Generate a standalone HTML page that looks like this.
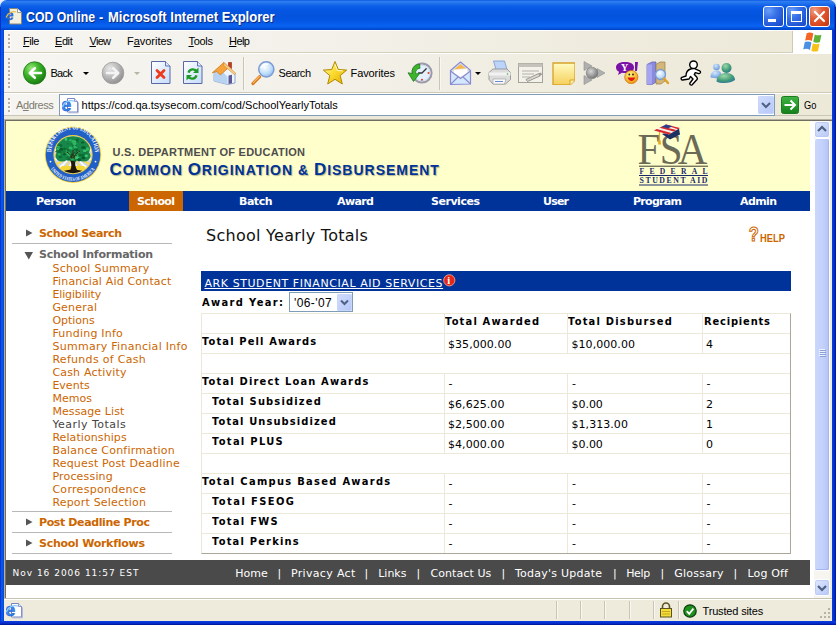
<!DOCTYPE html>
<html>
<head>
<meta charset="utf-8">
<title>COD Online - Microsoft Internet Explorer</title>
<style>
html,body{margin:0;padding:0;}
body{width:836px;height:625px;overflow:hidden;position:relative;background:#fff;font-family:"Liberation Sans",sans-serif;font-size:11px;color:#000;}
#win{position:absolute;left:0;top:0;width:836px;height:625px;background:#ece9d8;overflow:hidden;}
#win div,#win span,#win svg{position:absolute;}
.t{white-space:pre;line-height:1;}
.t u{text-decoration:underline;}
#title{left:0;top:0;width:836px;height:30px;border-radius:7px 7px 0 0;
 background:linear-gradient(to bottom,#0048d8 0px,#2f80f2 1px,#2474ee 3px,#0c5fe8 6px,#0556e2 10px,#0353dd 17px,#0458e6 22px,#0963f1 26px,#0556e0 28px,#0042c4 30px);}
#cornerbg{left:0;top:0;width:836px;height:10px;background:#e8eefc;}
.cbtn{top:6px;width:21px;height:21px;box-sizing:border-box;border:1px solid #fff;border-radius:3px;
 background:radial-gradient(circle at 25% 20%,#6a9ff8 0%,#3a74e8 35%,#2458d8 70%,#1a48c0 100%);}
.cbtn.close{background:radial-gradient(circle at 25% 20%,#f0a088 0%,#e2603a 35%,#d8481e 70%,#b83410 100%);}
.bl{left:0;top:30px;width:4px;height:595px;background:linear-gradient(to right,#001ad0 0,#0a52e4 1px,#0a5aea 2px,#0046d6 4px);}
.br{left:832px;top:30px;width:4px;height:595px;background:linear-gradient(to right,#0a3fe0 0,#0838d8 1px,#0428c4 2.500px,#00138c 4px);}
.bb{left:0;top:621px;width:836px;height:4px;background:linear-gradient(to bottom,#0a3fe0 0,#0838d8 1px,#0428c4 2.500px,#00138c 4px);}
.grip{width:2px;background:repeating-linear-gradient(to bottom,#b4b09c 0,#b4b09c 2px,rgba(255,255,255,0) 2px,rgba(255,255,255,0) 4px);box-shadow:1px 1px 0 rgba(255,255,255,.6);}
.sep{width:1px;background:#c9c5b2;box-shadow:1px 0 0 #f8f7f2;}
.dd{width:0;height:0;border-left:3px solid transparent;border-right:3px solid transparent;border-top:3px solid #000;}
#page{left:6px;top:121px;width:808px;height:477px;background:#fff;overflow:hidden;}
.hr{height:1px;background:#b8b8b8;left:6px;width:160px;}
.gl{background:#ece9d8;}
</style>
</head>
<body>
<div id="win">
<div id="cornerbg"></div><div id="title"></div>
<div class="bl"></div><div class="br"></div><div class="bb"></div>
<div style="left:0;top:7px;width:1px;height:23px;background:#0a2fc4"></div><div style="left:835px;top:7px;width:1px;height:23px;background:#001ea0"></div><div style="left:834px;top:5px;width:1px;height:25px;background:#0838d0"></div>
<svg style="left:5px;top:7px" width="19" height="19" viewBox="0 0 19 19"><path d="M4.500 1.500h8l4 4v11.500h-12z" fill="#f3f0e2" stroke="#8a8672" stroke-width="1"/><path d="M12.500 1.500v4h4" fill="#fff" stroke="#8a8672" stroke-width=".8"/>
<text x="0.800" y="13.200" font-family="Liberation Sans,sans-serif" font-weight="bold" font-size="14" fill="#2f6fe4" stroke="#1c3fb0" stroke-width=".3">e</text>
<path d="M1 10.500c2-5 7-6.500 10-5.500" fill="none" stroke="#f0c040" stroke-width="1.200"/></svg>
<span class="t" style="left:25.5px;top:9.5px;font:bold 14px 'Liberation Sans',sans-serif;line-height:1;transform:scaleX(0.878);transform-origin:0 0;color:#fff;text-shadow:1px 1px 0 #0a2a80;">COD Online</span><span class="t" style="left:98.5px;top:9.5px;font:bold 14px 'Liberation Sans',sans-serif;line-height:1;transform:scaleX(0.899);transform-origin:0 0;color:#fff;text-shadow:1px 1px 0 #0a2a80;">-</span><span class="t" style="left:107.5px;top:9.5px;font:bold 14px 'Liberation Sans',sans-serif;line-height:1;transform:scaleX(0.931);transform-origin:0 0;color:#fff;text-shadow:1px 1px 0 #0a2a80;">Microsoft Internet Explorer</span><div class="cbtn" style="left:763px"><div style="left:4px;top:12px;width:8px;height:3px;background:#fff"></div></div>
<div class="cbtn" style="left:786px"><div style="left:4px;top:4px;width:11px;height:11px;box-sizing:border-box;border:1px solid #fff;border-top-width:3px"></div></div>
<div class="cbtn close" style="left:809px"><svg style="left:0;top:0" width="19" height="19"><path d="M5 5l9 9M14 5l-9 9" stroke="#fff" stroke-width="2.2" stroke-linecap="round"/></svg></div>
<div style="left:4px;top:30px;width:828px;height:23px;background:linear-gradient(to right,#f6f5f1 0%,#f3f1ea 35%,#efecdf 70%,#ece9d8 100%)"></div>
<div style="left:4px;top:30px;width:828px;height:1px;background:#fff"></div>
<div style="left:4px;top:52px;width:789px;height:1px;background:#d4cfba"></div>
<div style="left:792px;top:31px;width:1px;height:21px;background:#cfcab6"></div>
<div style="left:793px;top:30px;width:39px;height:23px;background:#fff"></div>
<div class="grip" style="left:8px;top:34px;height:15px"></div>
<span class="t" style="left:23px;top:36px;font:normal 11px 'Liberation Sans',sans-serif;line-height:1;letter-spacing:-0.42px;color:#000;"><u>F</u>ile</span><span class="t" style="left:55px;top:36px;font:normal 11px 'Liberation Sans',sans-serif;line-height:1;letter-spacing:-0.42px;color:#000;"><u>E</u>dit</span><span class="t" style="left:89.5px;top:36px;font:normal 11px 'Liberation Sans',sans-serif;line-height:1;letter-spacing:-0.72px;color:#000;"><u>V</u>iew</span><span class="t" style="left:127px;top:36px;font:normal 11px 'Liberation Sans',sans-serif;line-height:1;letter-spacing:-0.03px;color:#000;">F<u>a</u>vorites</span><span class="t" style="left:188.5px;top:36px;font:normal 11px 'Liberation Sans',sans-serif;line-height:1;letter-spacing:-0.30px;color:#000;"><u>T</u>ools</span><span class="t" style="left:229px;top:36px;font:normal 11px 'Liberation Sans',sans-serif;line-height:1;letter-spacing:-0.55px;color:#000;"><u>H</u>elp</span><svg style="left:800px;top:31px" width="26" height="22" viewBox="0 0 21 18.500"><path d="M5.2 1.8c2-.9 4-.6 5.6.4l-1.3 6.2c-1.6-1-3.6-1.3-5.6-.4z" fill="#f26522"/>
<path d="M12 2.9c1.8.9 3.700 1 5.600.2l-1.300 6.200c-1.900.8-3.800.7-5.600-.2z" fill="#5fb233"/>
<path d="M3.600 9.300c2-.9 4-.6 5.600.4l-1.300 6.200c-1.600-1-3.600-1.300-5.600-.4z" fill="#4a90e2"/>
<path d="M10.400 10.400c1.800.9 3.700 1 5.600.2l-1.300 6.200c-1.900.8-3.800.7-5.600-.2z" fill="#f9c016"/></svg>
<div style="left:4px;top:53px;width:828px;height:40px;background:linear-gradient(to right,#f6f5f1 0%,#f3f1ea 35%,#efecdf 70%,#ece9d8 100%)"></div>
<div style="left:4px;top:53px;width:828px;height:1px;background:#fff"></div>
<div class="grip" style="left:8px;top:58px;height:31px"></div>
<svg style="left:0;top:0" width="0" height="0"><defs>
<radialGradient id="gG" cx=".35" cy=".3" r=".75"><stop offset="0" stop-color="#9be87a"/><stop offset=".45" stop-color="#3cb52a"/><stop offset="1" stop-color="#17780f"/></radialGradient>
<radialGradient id="gS" cx=".35" cy=".3" r=".75"><stop offset="0" stop-color="#e8e8e8"/><stop offset=".5" stop-color="#bcbcbc"/><stop offset="1" stop-color="#8e8e8e"/></radialGradient>
<linearGradient id="gP" x1="0" y1="0" x2="1" y2="1"><stop offset="0" stop-color="#ffffff"/><stop offset="1" stop-color="#c4dcfa"/></linearGradient>
<linearGradient id="gY" x1="0" y1="0" x2="0" y2="1"><stop offset="0" stop-color="#fffbc0"/><stop offset="1" stop-color="#f6cf5c"/></linearGradient>
<radialGradient id="gL" cx=".4" cy=".35" r=".7"><stop offset="0" stop-color="#ffffff"/><stop offset=".6" stop-color="#c2e0fa"/><stop offset="1" stop-color="#8cb8ec"/></radialGradient>
<linearGradient id="gStar" x1="0" y1="0" x2="1" y2="1"><stop offset="0" stop-color="#fff9a0"/><stop offset=".5" stop-color="#fbd92c"/><stop offset="1" stop-color="#e0a800"/></linearGradient>
<linearGradient id="gGo" x1="0" y1="0" x2="0" y2="1"><stop offset="0" stop-color="#3fb545"/><stop offset="1" stop-color="#14801a"/></linearGradient>
<linearGradient id="gSb" x1="0" y1="0" x2="1" y2="0"><stop offset="0" stop-color="#c9d7fc"/><stop offset=".5" stop-color="#c2d0fb"/><stop offset="1" stop-color="#b0c0f2"/></linearGradient>
<linearGradient id="gBtn" x1="0" y1="0" x2="1" y2="1"><stop offset="0" stop-color="#e2eafe"/><stop offset="1" stop-color="#b4c6f6"/></linearGradient>
<radialGradient id="gBall" cx=".4" cy=".35" r=".7"><stop offset="0" stop-color="#d8d8d8"/><stop offset="1" stop-color="#6e6e6e"/></radialGradient>
<radialGradient id="gSm" cx=".4" cy=".3" r=".7"><stop offset="0" stop-color="#fff27a"/><stop offset="1" stop-color="#f39a10"/></radialGradient>
<radialGradient id="gMs" cx=".4" cy=".3" r=".8"><stop offset="0" stop-color="#9fd8a8"/><stop offset=".6" stop-color="#3f9a78"/><stop offset="1" stop-color="#2a6aa8"/></radialGradient>
<radialGradient id="gMs2" cx=".4" cy=".3" r=".8"><stop offset="0" stop-color="#d0e8ff"/><stop offset="1" stop-color="#5a8ed8"/></radialGradient>
</defs></svg>
<svg style="left:23px;top:61px" width="24" height="24" viewBox="0 0 24 24"><circle cx="11.6" cy="12" r="11.2" fill="url(#gG)" stroke="#1f7a16" stroke-width=".8"/><path d="M18 12H7.500M11.800 7.200L6.800 12l5 4.800" fill="none" stroke="#fff" stroke-width="2.600" stroke-linecap="round" stroke-linejoin="round"/></svg>
<span class="t" style="left:50.5px;top:68px;font:normal 11px 'Liberation Sans',sans-serif;line-height:1;letter-spacing:-0.72px;color:#000;">Back</span><div class="dd" style="left:82.5px;top:71.5px"></div>
<svg style="left:101px;top:61px" width="24" height="24" viewBox="0 0 24 24"><circle cx="12" cy="12" r="10.800" fill="url(#gS)" stroke="#9a9a9a" stroke-width=".8"/><path d="M6 12h10.500M12.200 7.200l5 4.800-5 4.800" fill="none" stroke="#f4f4f4" stroke-width="2.600" stroke-linecap="round" stroke-linejoin="round"/></svg>
<div class="dd" style="left:133.500px;top:71.500px;border-top-color:#b8b5a6"></div>
<svg style="left:151px;top:61px" width="20" height="24" viewBox="0 0 20 24"><path d="M.5.5h14l4.500 4.500v17.500H.5z" fill="url(#gP)" stroke="#5868a8"/><path d="M14.500.5v4.500H19" fill="#dce8fc" stroke="#5868a8" stroke-width=".9"/><path d="M6 9.500l7 7M13 9.500l-7 7" stroke="#ee3a1a" stroke-width="2.800" stroke-linecap="round"/></svg>
<svg style="left:183px;top:61px" width="20" height="24" viewBox="0 0 20 24"><path d="M.5.5h14l4.500 4.500v17.500H.5z" fill="url(#gP)" stroke="#5868a8"/><path d="M14.500.5v4.500H19" fill="#dce8fc" stroke="#5868a8" stroke-width=".9"/><path d="M13.800 10.500a4.600 4.600 0 0 0-8.300 1.200" fill="none" stroke="#1f9a28" stroke-width="2.400"/><path d="M15.500 6.500v5.500h-5.500z" fill="#1f9a28"/><path d="M5.200 15.500a4.600 4.600 0 0 0 8.300-1.200" fill="none" stroke="#1f9a28" stroke-width="2.400"/><path d="M3.500 19.500v-5.500h5.500z" fill="#1f9a28"/></svg>
<svg style="left:211px;top:60px" width="26" height="25" viewBox="0 0 26 25"><path d="M17.500 2.500h3v6l-3-3z" fill="#c8381a" stroke="#8a2a10" stroke-width=".6"/>
<path d="M3 13.500L13 4l11 9.500v9.500l-7.500 1.500L3 21z" fill="#eef4fc" stroke="#7f93c0" stroke-width=".8"/>
<path d="M3 13.500l6.500-4 7 7.500V24.500L3 21z" fill="#b8d2f2"/>
<path d="M1.300 12.800L12.800 2.500l5 5-8.500 7.500-3.500-3.500z" fill="#f6a23c" stroke="#c87414" stroke-width=".7"/>
<path d="M12.800 2.500l12 10.800-1.500 1.200L12.800 5.500z" fill="#fcd28a" stroke="#c87414" stroke-width=".5"/>
<path d="M17.500 15.500l3.500-.8v8.500l-3.500.8z" fill="#5a5a9a"/></svg>
<div class="sep" style="left:243px;top:57px;height:33px"></div>
<svg style="left:250px;top:60px" width="26" height="26" viewBox="0 0 26 26"><path d="M9.500 16.800L3 23.500" stroke="#d8781c" stroke-width="3.200" stroke-linecap="round"/><path d="M9.300 16.500L3.200 22.800" stroke="#f8b860" stroke-width="1.200" stroke-linecap="round"/>
<circle cx="16.300" cy="9.300" r="7.600" fill="url(#gL)" stroke="#7d9bd2" stroke-width="1.500"/><path d="M11.500 7.500a5.500 5.500 0 0 1 6-3.200" fill="none" stroke="#fff" stroke-width="1.600" stroke-linecap="round"/></svg>
<span class="t" style="left:278.6px;top:68px;font:normal 11px 'Liberation Sans',sans-serif;line-height:1;letter-spacing:-0.49px;color:#000;">Search</span><svg style="left:322px;top:60px" width="26" height="26" viewBox="0 0 26 26"><path d="M13 1.500l3.300 8 8.400.6-6.500 5.500 2.100 8.400L13 19.300 5.700 24l2.100-8.400L1.300 10.100l8.400-.6z" fill="url(#gStar)" stroke="#b08a00" stroke-width="1" stroke-linejoin="round"/><path d="M13 4.500l2.300 6 5.500.4" fill="none" stroke="#fffbd0" stroke-width="1"/></svg>
<span class="t" style="left:350.5px;top:68px;font:normal 11px 'Liberation Sans',sans-serif;line-height:1;letter-spacing:-0.09px;color:#000;">Favorites</span><svg style="left:406px;top:60px" width="28" height="26" viewBox="0 0 28 26"><circle cx="16" cy="13" r="9.600" fill="#e4f0fc" stroke="#9a9aa8" stroke-width="2"/><circle cx="16" cy="13" r="7.800" fill="none" stroke="#c8d8ec" stroke-width=".8"/>
<path d="M16 13l4.200-4.200M16 13h-3.500" stroke="#333" stroke-width="1.300" stroke-linecap="round"/>
<circle cx="22.500" cy="13" r="1" fill="#e83a1a"/><circle cx="16" cy="19.800" r="1" fill="#e83a1a"/>
<path d="M13.500 4.200C8 4.500 5.200 9 6.500 13.500L2 12.800l5.500 8.700 6.200-8-4 .4C9.200 10.500 11 8.500 14 8.200z" fill="#3cb42c" stroke="#1f7d18" stroke-width=".8" stroke-linejoin="round"/></svg>
<div class="sep" style="left:439px;top:57px;height:33px"></div>
<svg style="left:449px;top:61px" width="23" height="25" viewBox="0 0 23 25"><path d="M1.500 9.500L11.500 1l10 8.500V23l-20 .500z" fill="#d4e8fc" stroke="#8a8ad2" stroke-width="1.200" stroke-linejoin="round"/>
<path d="M3.500 9.500l8-6.500 8 6.500-8 4z" fill="#f8b850"/><path d="M4.500 8.500l14-1 .5 4.500-7.500 4-7-4z" fill="#fff" stroke="#e0d8c0" stroke-width=".5"/>
<path d="M1.500 10l10 7.500L21.500 10M1.500 23.500l8-8M21.500 23l-8-7.500" fill="none" stroke="#8a8ad2" stroke-width="1.100"/></svg>
<div class="dd" style="left:474.500px;top:72px"></div>
<svg style="left:487px;top:60px" width="25" height="26" viewBox="0 0 25 26"><path d="M6.500 1h11l3 10h-11z" fill="#bcd4f8" stroke="#7a98d0" stroke-width=".8"/>
<path d="M2 12.500l4-3.500h14l3.500 3.500v7l-5 4.500H6L2 19.500z" fill="#dcdcdc" stroke="#8a8a8a" stroke-width=".8"/>
<path d="M2 12.500h21.500v3H2z" fill="#f2f2f2"/><path d="M6 19h13l-1.500 5H6z" fill="#fafafa" stroke="#9a9a9a" stroke-width=".6"/><path d="M8 21.500h8" stroke="#6a8ad0" stroke-width="1"/><circle cx="20.500" cy="14" r=".8" fill="#3cb42c"/></svg>
<svg style="left:518px;top:63px" width="25" height="20" viewBox="0 0 25 20"><rect x=".5" y=".5" width="24" height="19" fill="#f2f1ea" stroke="#a4a29a"/><rect x=".5" y=".5" width="24" height="3.500" fill="#c4c2ba"/>
<path d="M4 8h17M4 11h12M4 14h8" stroke="#b4b2aa" stroke-width="1"/><path d="M8 16.500l12.500-6 1.500 2.500-12.500 5.500z" fill="#d8d6ce" stroke="#8a8880" stroke-width=".8"/><path d="M20.500 10.500l2.500-1 1 2-2 1.500z" fill="#9a9890"/></svg>
<svg style="left:551.5px;top:61.5px" width="23" height="23" viewBox="0 0 23 23"><path d="M1 1h22v17l-5 5H1z" fill="url(#gY)" stroke="#d8a228" stroke-width="1.300"/><path d="M23 18h-5v5" fill="#fff2b0" stroke="#d8a228" stroke-width="1"/></svg>
<svg style="left:582px;top:60px" width="24" height="26" viewBox="0 0 24 26"><path d="M2 1.500l8 4.500-8 4.500zM2 15.500l8 4.500-8 4.500zM15 8.500l8 4.500-8 4.500z" fill="#b0b0b0" stroke="#8e8e8e" stroke-width=".6"/><circle cx="10" cy="13" r="5.800" fill="url(#gBall)" stroke="#7a7a7a" stroke-width=".6"/></svg>
<svg style="left:614px;top:60px" width="27" height="26" viewBox="0 0 27 26"><path d="M2 7.500c0-4 4-5.500 9-5.500s9 1.500 9 5.500-4 5.500-9 5.500c-1 0-2 0-3-.3L4 15l1-3.200C3 10.800 2 9.500 2 7.500z" fill="#7a12a8"/><path d="M21 2h3l-1 9h-2z" fill="#7a12a8"/>
<text x="7" y="11" font-family="Liberation Serif,serif" font-weight="bold" font-size="10" fill="#fff">Y</text>
<circle cx="17.300" cy="17" r="6.600" fill="url(#gSm)" stroke="#c86a08" stroke-width=".7"/><path d="M13.500 17.500c1.500 4.500 6.500 4.500 7.600 0z" fill="#e01818"/><circle cx="15.300" cy="14.500" r=".9" fill="#222"/><circle cx="19" cy="14.500" r=".9" fill="#222"/></svg>
<svg style="left:646px;top:61px" width="24" height="25" viewBox="0 0 24 25"><path d="M1 3.500l5-2.500h4v20l-4 2.500H1z" fill="#8a8ae0" stroke="#5a5aa8" stroke-width=".7"/><path d="M1 3.500h5V23.500H1z" fill="#a4a4f0"/>
<path d="M10 3.500l4-2.500h5v19l-4 3h-5z" fill="#d2b67a" stroke="#9a8048" stroke-width=".7"/>
<circle cx="14.500" cy="13.500" r="5" fill="url(#gL)" stroke="#7d9bd2" stroke-width="1.300"/><path d="M18 17.500l4 4.500" stroke="#e0a020" stroke-width="2.400" stroke-linecap="round"/></svg>
<svg style="left:680px;top:60px" width="23" height="26" viewBox="0 0 23 26"><circle cx="13.500" cy="4.800" r="3.800" fill="#fff" stroke="#000" stroke-width="1.400"/>
<path d="M10.500 9c-3 1-4.500 4-4.500 7l-4.200 1.300c-1.200.5-.8 3 .7 2.700l6.500-1 1.500-2.500 2.500 2.500-3 4c-.8 1.500 1 2.700 2.200 1.700l4.800-5.200c.6-.8.300-1.700-.3-2.400l-2.400-2.500 1-2 3.500 1c1.500.3 2.400-2 .8-2.700l-5-2.200c-1.500-.5-2.800-.3-4.100.3z" fill="#fff" stroke="#000" stroke-width="1.400" stroke-linejoin="round"/></svg>
<svg style="left:710px;top:62px" width="26" height="22" viewBox="0 0 26 22"><circle cx="6.500" cy="5" r="3.300" fill="url(#gMs2)"/><path d="M.5 15.500c0-5 3-7 6-7s5 2 5 5l-4 3z" fill="url(#gMs2)"/>
<circle cx="16.500" cy="6" r="5" fill="url(#gMs)"/><path d="M6.500 19.500c0-6 5-8.500 10-8.500s8.500 3 8.500 7c-4 3.500-14 4-18.500 1.500z" fill="url(#gMs)"/></svg>
<div style="left:4px;top:92px;width:828px;height:1px;background:#cdc9b6"></div><div style="left:4px;top:93px;width:828px;height:26px;background:linear-gradient(to right,#f6f5f1 0%,#f3f1ea 35%,#efecdf 70%,#ece9d8 100%)"></div>
<div style="left:4px;top:93px;width:828px;height:1px;background:#fff"></div>
<div style="left:4px;top:115px;width:828px;height:1px;background:#cbc7b8"></div>
<div style="left:4px;top:116px;width:828px;height:3px;background:#ece9d8"></div>
<div class="grip" style="left:8px;top:98px;height:15px"></div>
<span class="t" style="left:16px;top:100px;font:normal 11px 'Liberation Sans',sans-serif;line-height:1;letter-spacing:-0.43px;color:#7f7c70;">A<u>d</u>dress</span><div style="left:59px;top:94px;width:716px;height:22px;box-sizing:border-box;border:1px solid #7f9db9;background:#fff"></div>
<svg style="left:62px;top:97px" width="17" height="17" viewBox="0 0 17 17"><path d="M5.500 1.500h7l3 3v10.500h-10z" fill="#fff" stroke="#7a86c0" stroke-width="1"/><path d="M12.500 1.500v3h3" fill="#dce8fc" stroke="#7a86c0" stroke-width=".8"/><path d="M6.500 15.800h9.800v-10.500" fill="none" stroke="#a8b2d8" stroke-width="1"/>
<text x="-0.800" y="14.200" font-family="Liberation Sans,sans-serif" font-weight="bold" font-size="18" fill="#3a8cf2" stroke="#1b55c8" stroke-width=".5">e</text>
<path d="M.3 10c2-5.500 8-7.500 11.500-5.800" fill="none" stroke="#8ccaf8" stroke-width="1.300"/></svg>
<span class="t" style="left:81.5px;top:100px;font:normal 11px 'Liberation Sans',sans-serif;line-height:1;letter-spacing:0.01px;color:#000;">https://cod.qa.tsysecom.com/cod/SchoolYearlyTotals</span><div style="left:758px;top:96px;width:16px;height:18px;border-radius:2px;background:linear-gradient(135deg,#d2defe,#b4c6f8);box-shadow:inset 0 0 0 1px #c8d6fc"></div>
<svg style="left:758px;top:96px" width="16" height="18" viewBox="0 0 16 18"><path d="M4 7l4 4 4-4" fill="none" stroke="#4d6185" stroke-width="2"/></svg>
<svg style="left:781px;top:96px" width="18" height="18" viewBox="0 0 18 18"><rect x=".5" y=".5" width="17" height="17" rx="2" fill="url(#gGo)" stroke="#1c7a20"/><path d="M3.500 9h10M9.500 4.500L14 9l-4.500 4.500" fill="none" stroke="#fff" stroke-width="2" stroke-linejoin="miter"/></svg>
<span class="t" style="left:804px;top:100px;font:normal 11px 'Liberation Sans',sans-serif;line-height:1;transform:scaleX(0.844);transform-origin:0 0;color:#000;">Go</span><div style="left:4px;top:119px;width:828px;height:1px;background:#b4b1a0"></div>
<div style="left:4px;top:120px;width:828px;height:1px;background:#716f64"></div>
<div style="left:4px;top:119px;width:1px;height:479px;background:#b4b1a0"></div>
<div style="left:5px;top:120px;width:1px;height:478px;background:#716f64"></div>
<div id="page"></div>
<div style="left:6px;top:121px;width:804px;height:70px;background:#ffffcc"></div>
<div style="left:6px;top:191px;width:804px;height:20px;background:#003399"></div>
<div style="left:129px;top:191px;width:54px;height:20px;background:#cc6600"></div>
<span class="t" style="left:36px;top:196px;font:bold 11px 'DejaVu Sans','Liberation Sans',sans-serif;line-height:1;letter-spacing:-0.58px;color:#fff;">Person</span><span class="t" style="left:137px;top:196px;font:bold 11px 'DejaVu Sans','Liberation Sans',sans-serif;line-height:1;letter-spacing:-0.63px;color:#fff;">School</span><span class="t" style="left:239px;top:196px;font:bold 11px 'DejaVu Sans','Liberation Sans',sans-serif;line-height:1;letter-spacing:-0.48px;color:#fff;">Batch</span><span class="t" style="left:337px;top:196px;font:bold 11px 'DejaVu Sans','Liberation Sans',sans-serif;line-height:1;letter-spacing:-0.60px;color:#fff;">Award</span><span class="t" style="left:431px;top:196px;font:bold 11px 'DejaVu Sans','Liberation Sans',sans-serif;line-height:1;letter-spacing:-0.47px;color:#fff;">Services</span><span class="t" style="left:543px;top:196px;font:bold 11px 'DejaVu Sans','Liberation Sans',sans-serif;line-height:1;letter-spacing:-0.79px;color:#fff;">User</span><span class="t" style="left:633px;top:196px;font:bold 11px 'DejaVu Sans','Liberation Sans',sans-serif;line-height:1;letter-spacing:-0.71px;color:#fff;">Program</span><span class="t" style="left:740px;top:196px;font:bold 11px 'DejaVu Sans','Liberation Sans',sans-serif;line-height:1;letter-spacing:-0.61px;color:#fff;">Admin</span><span class="t" style="left:112.6px;top:147px;font:bold 11px 'Liberation Sans',sans-serif;line-height:1;letter-spacing:0.24px;color:#4d4d4d;">U.S. DEPARTMENT OF EDUCATION</span><span class="t" style="left:109.4px;top:160.6px;font:bold 14px 'Liberation Sans',sans-serif;line-height:1;letter-spacing:0.98px;color:#003399;text-shadow:1px 1px 1px rgba(120,120,90,.55);"><b style="font-size:17px">C</b>OMMON <b style="font-size:17px">O</b>RIGINATION &amp; <b style="font-size:17px">D</b>ISBURSEMENT</span><svg style="left:25px;top:229px" width="8" height="8" viewBox="0 0 8 8"><path d="M1 .5l6.500 3.500L1 7.500z" fill="#555"/></svg>
<span class="t" style="left:39px;top:228px;font:bold 11px 'DejaVu Sans','Liberation Sans',sans-serif;line-height:1;letter-spacing:-0.38px;color:#cc6600;">School Search</span><div class="hr" style="left:12px;top:243px"></div>
<svg style="left:24px;top:251px" width="10" height="9" viewBox="0 0 10 9"><path d="M.5 1h8.500L4.800 8.500z" fill="#555"/></svg>
<span class="t" style="left:39px;top:249px;font:bold 11px 'DejaVu Sans','Liberation Sans',sans-serif;line-height:1;letter-spacing:-0.23px;color:#666;">School Information</span><span class="t" style="left:52.4px;top:263px;font:normal 11px 'DejaVu Sans','Liberation Sans',sans-serif;line-height:1;letter-spacing:0.29px;color:#cc6600;">School Summary</span><span class="t" style="left:52.4px;top:276px;font:normal 11px 'DejaVu Sans','Liberation Sans',sans-serif;line-height:1;letter-spacing:0.17px;color:#cc6600;">Financial Aid Contact</span><span class="t" style="left:52.4px;top:289px;font:normal 11px 'DejaVu Sans','Liberation Sans',sans-serif;line-height:1;letter-spacing:-0.13px;color:#cc6600;">Eligibility</span><span class="t" style="left:52.4px;top:302px;font:normal 11px 'DejaVu Sans','Liberation Sans',sans-serif;line-height:1;letter-spacing:0.21px;color:#cc6600;">General</span><span class="t" style="left:52.4px;top:315px;font:normal 11px 'DejaVu Sans','Liberation Sans',sans-serif;line-height:1;letter-spacing:-0.01px;color:#cc6600;">Options</span><span class="t" style="left:52.4px;top:328px;font:normal 11px 'DejaVu Sans','Liberation Sans',sans-serif;line-height:1;letter-spacing:0.22px;color:#cc6600;">Funding Info</span><span class="t" style="left:52.4px;top:341px;font:normal 11px 'DejaVu Sans','Liberation Sans',sans-serif;line-height:1;letter-spacing:0.28px;color:#cc6600;">Summary Financial Info</span><span class="t" style="left:52.4px;top:354px;font:normal 11px 'DejaVu Sans','Liberation Sans',sans-serif;line-height:1;letter-spacing:0.30px;color:#cc6600;">Refunds of Cash</span><span class="t" style="left:52.4px;top:367px;font:normal 11px 'DejaVu Sans','Liberation Sans',sans-serif;line-height:1;letter-spacing:0.19px;color:#cc6600;">Cash Activity</span><span class="t" style="left:52.4px;top:380px;font:normal 11px 'DejaVu Sans','Liberation Sans',sans-serif;line-height:1;letter-spacing:0.01px;color:#cc6600;">Events</span><span class="t" style="left:52.4px;top:393px;font:normal 11px 'DejaVu Sans','Liberation Sans',sans-serif;line-height:1;letter-spacing:0.04px;color:#cc6600;">Memos</span><span class="t" style="left:52.4px;top:406px;font:normal 11px 'DejaVu Sans','Liberation Sans',sans-serif;line-height:1;letter-spacing:0.09px;color:#cc6600;">Message List</span><span class="t" style="left:52.4px;top:419px;font:normal 11px 'DejaVu Sans','Liberation Sans',sans-serif;line-height:1;letter-spacing:0.47px;color:#444;">Yearly Totals</span><span class="t" style="left:52.4px;top:432px;font:normal 11px 'DejaVu Sans','Liberation Sans',sans-serif;line-height:1;letter-spacing:0.08px;color:#cc6600;">Relationships</span><span class="t" style="left:52.4px;top:445px;font:normal 11px 'DejaVu Sans','Liberation Sans',sans-serif;line-height:1;letter-spacing:0.20px;color:#cc6600;">Balance Confirmation</span><span class="t" style="left:52.4px;top:458px;font:normal 11px 'DejaVu Sans','Liberation Sans',sans-serif;line-height:1;letter-spacing:0.19px;color:#cc6600;">Request Post Deadline</span><span class="t" style="left:52.4px;top:471px;font:normal 11px 'DejaVu Sans','Liberation Sans',sans-serif;line-height:1;letter-spacing:0.18px;color:#cc6600;">Processing</span><span class="t" style="left:52.4px;top:484px;font:normal 11px 'DejaVu Sans','Liberation Sans',sans-serif;line-height:1;letter-spacing:0.29px;color:#cc6600;">Correspondence</span><span class="t" style="left:52.4px;top:497px;font:normal 11px 'DejaVu Sans','Liberation Sans',sans-serif;line-height:1;letter-spacing:0.19px;color:#cc6600;">Report Selection</span><div class="hr" style="left:12px;top:511px"></div>
<svg style="left:25px;top:518px" width="8" height="8" viewBox="0 0 8 8"><path d="M1 .5l6.500 3.500L1 7.500z" fill="#555"/></svg>
<span class="t" style="left:39px;top:517px;font:bold 11px 'DejaVu Sans','Liberation Sans',sans-serif;line-height:1;letter-spacing:-0.38px;color:#cc6600;">Post Deadline Proc</span><div class="hr" style="left:12px;top:532px"></div>
<svg style="left:25px;top:539px" width="8" height="8" viewBox="0 0 8 8"><path d="M1 .5l6.500 3.500L1 7.500z" fill="#555"/></svg>
<span class="t" style="left:39px;top:538px;font:bold 11px 'DejaVu Sans','Liberation Sans',sans-serif;line-height:1;letter-spacing:-0.26px;color:#cc6600;">School Workflows</span><div class="hr" style="left:12px;top:553px"></div>
<span class="t" style="left:206px;top:228px;font:normal 16px 'DejaVu Sans','Liberation Sans',sans-serif;line-height:1;letter-spacing:0.27px;color:#111;">School Yearly Totals</span><svg style="left:746px;top:224px" width="14" height="20" viewBox="0 0 14 20"><text x="2.800" y="17.400" font-family="Liberation Sans,sans-serif" font-weight="bold" font-size="20" fill="#fff" stroke="#cc6600" stroke-width="1.100" textLength="10" lengthAdjust="spacingAndGlyphs">?</text></svg>
<span class="t" style="left:760px;top:233px;font:bold 11px 'Liberation Sans',sans-serif;line-height:1;transform:scaleX(0.849);transform-origin:0 0;color:#cc6600;">HELP</span><div style="left:201px;top:271px;width:590px;height:20px;background:#003399"></div>
<span class="t" style="left:204.5px;top:277.5px;font:normal 11px 'DejaVu Sans','Liberation Sans',sans-serif;line-height:1;letter-spacing:0.57px;color:#fff;text-decoration:underline;">ARK STUDENT FINANCIAL AID SERVICES</span><svg style="left:443px;top:274px" width="13" height="13" viewBox="0 0 13 13"><circle cx="6.300" cy="6.300" r="5.600" fill="#e4261a" stroke="#f6a488" stroke-width=".9"/><text x="4.300" y="10" font-family="Liberation Serif,serif" font-weight="bold" font-size="10.500" fill="#fff">i</text></svg>
<span class="t" style="left:201.5px;top:297px;font:bold 11px 'DejaVu Sans','Liberation Sans',sans-serif;line-height:1;letter-spacing:1.51px;transform:scaleX(0.900);transform-origin:0 0;color:#000;">Award Year:</span><div style="left:289px;top:292px;width:64px;height:20px;box-sizing:border-box;border:1px solid #7f9db9;background:#fff"></div>
<span class="t" style="left:294px;top:297px;font:normal 12px 'Liberation Sans',sans-serif;line-height:1;letter-spacing:0.40px;color:#000;">'06-'07</span><div style="left:337px;top:294px;width:15px;height:17px;border-radius:2px;background:linear-gradient(135deg,#d2defe,#b4c6f8);box-shadow:inset 0 0 0 1px #c8d6fc"></div>
<svg style="left:337px;top:294px" width="15" height="17" viewBox="0 0 15 17"><path d="M4 6.500l3.500 3.500L11 6.500" fill="none" stroke="#4d6185" stroke-width="2"/></svg>
<div style="left:201px;top:313px;width:590px;height:241px;box-sizing:border-box;border:1px solid #ece9d8;border-right-color:#aca899;border-bottom-color:#aca899"></div>
<div class="gl" style="left:202px;top:333px;width:588px;height:1px"></div>
<div class="gl" style="left:202px;top:353px;width:588px;height:1px"></div>
<div class="gl" style="left:202px;top:373px;width:588px;height:1px"></div>
<div class="gl" style="left:202px;top:393px;width:588px;height:1px"></div>
<div class="gl" style="left:202px;top:413px;width:588px;height:1px"></div>
<div class="gl" style="left:202px;top:433px;width:588px;height:1px"></div>
<div class="gl" style="left:202px;top:453px;width:588px;height:1px"></div>
<div class="gl" style="left:202px;top:473px;width:588px;height:1px"></div>
<div class="gl" style="left:202px;top:493px;width:588px;height:1px"></div>
<div class="gl" style="left:202px;top:513px;width:588px;height:1px"></div>
<div class="gl" style="left:202px;top:533px;width:588px;height:1px"></div>
<div class="gl" style="left:444px;top:313px;width:1px;height:40px"></div>
<div class="gl" style="left:444px;top:373px;width:1px;height:80px"></div>
<div class="gl" style="left:444px;top:473px;width:1px;height:80px"></div>
<div class="gl" style="left:567px;top:313px;width:1px;height:40px"></div>
<div class="gl" style="left:567px;top:373px;width:1px;height:80px"></div>
<div class="gl" style="left:567px;top:473px;width:1px;height:80px"></div>
<div class="gl" style="left:702px;top:313px;width:1px;height:40px"></div>
<div class="gl" style="left:702px;top:373px;width:1px;height:80px"></div>
<div class="gl" style="left:702px;top:473px;width:1px;height:80px"></div>
<span class="t" style="left:445px;top:316px;font:bold 11px 'DejaVu Sans','Liberation Sans',sans-serif;line-height:1;letter-spacing:1.32px;transform:scaleX(0.900);transform-origin:0 0;color:#000;">Total Awarded</span><span class="t" style="left:568px;top:316px;font:bold 11px 'DejaVu Sans','Liberation Sans',sans-serif;line-height:1;letter-spacing:1.35px;transform:scaleX(0.900);transform-origin:0 0;color:#000;">Total Disbursed</span><span class="t" style="left:704px;top:316px;font:bold 11px 'DejaVu Sans','Liberation Sans',sans-serif;line-height:1;letter-spacing:0.93px;transform:scaleX(0.900);transform-origin:0 0;color:#000;">Recipients</span><span class="t" style="left:202px;top:336px;font:bold 11px 'DejaVu Sans','Liberation Sans',sans-serif;line-height:1;letter-spacing:1.26px;transform:scaleX(0.900);transform-origin:0 0;color:#000;">Total Pell Awards</span><span class="t" style="left:202px;top:376px;font:bold 11px 'DejaVu Sans','Liberation Sans',sans-serif;line-height:1;letter-spacing:1.30px;transform:scaleX(0.900);transform-origin:0 0;color:#000;">Total Direct Loan Awards</span><span class="t" style="left:211.7px;top:396px;font:bold 11px 'DejaVu Sans','Liberation Sans',sans-serif;line-height:1;letter-spacing:1.31px;transform:scaleX(0.900);transform-origin:0 0;color:#000;">Total Subsidized</span><span class="t" style="left:211.7px;top:416px;font:bold 11px 'DejaVu Sans','Liberation Sans',sans-serif;line-height:1;letter-spacing:1.23px;transform:scaleX(0.900);transform-origin:0 0;color:#000;">Total Unsubsidized</span><span class="t" style="left:211.7px;top:436px;font:bold 11px 'DejaVu Sans','Liberation Sans',sans-serif;line-height:1;letter-spacing:1.45px;transform:scaleX(0.900);transform-origin:0 0;color:#000;">Total PLUS</span><span class="t" style="left:202px;top:476px;font:bold 11px 'DejaVu Sans','Liberation Sans',sans-serif;line-height:1;letter-spacing:1.45px;transform:scaleX(0.900);transform-origin:0 0;color:#000;">Total Campus Based Awards</span><span class="t" style="left:211.7px;top:496px;font:bold 11px 'DejaVu Sans','Liberation Sans',sans-serif;line-height:1;letter-spacing:1.59px;transform:scaleX(0.900);transform-origin:0 0;color:#000;">Total FSEOG</span><span class="t" style="left:211.7px;top:516px;font:bold 11px 'DejaVu Sans','Liberation Sans',sans-serif;line-height:1;letter-spacing:1.43px;transform:scaleX(0.900);transform-origin:0 0;color:#000;">Total FWS</span><span class="t" style="left:211.7px;top:536px;font:bold 11px 'DejaVu Sans','Liberation Sans',sans-serif;line-height:1;letter-spacing:1.34px;transform:scaleX(0.900);transform-origin:0 0;color:#000;">Total Perkins</span><span class="t" style="left:448px;top:339px;font:normal 11px 'DejaVu Sans','Liberation Sans',sans-serif;line-height:1;letter-spacing:0.05px;color:#000;">$35,000.00</span><span class="t" style="left:571.5px;top:339px;font:normal 11px 'DejaVu Sans','Liberation Sans',sans-serif;line-height:1;letter-spacing:0.05px;color:#000;">$10,000.00</span><span class="t" style="left:706px;top:339px;font:normal 11px 'DejaVu Sans','Liberation Sans',sans-serif;line-height:1;color:#000;">4</span><span class="t" style="left:448.5px;top:378px;font:normal 11px 'DejaVu Sans','Liberation Sans',sans-serif;line-height:1;color:#000;">-</span><span class="t" style="left:572px;top:378px;font:normal 11px 'DejaVu Sans','Liberation Sans',sans-serif;line-height:1;color:#000;">-</span><span class="t" style="left:706.5px;top:378px;font:normal 11px 'DejaVu Sans','Liberation Sans',sans-serif;line-height:1;color:#000;">-</span><span class="t" style="left:448px;top:399px;font:normal 11px 'DejaVu Sans','Liberation Sans',sans-serif;line-height:1;letter-spacing:0.05px;color:#000;">$6,625.00</span><span class="t" style="left:571.5px;top:399px;font:normal 11px 'DejaVu Sans','Liberation Sans',sans-serif;line-height:1;letter-spacing:-0.03px;color:#000;">$0.00</span><span class="t" style="left:706px;top:399px;font:normal 11px 'DejaVu Sans','Liberation Sans',sans-serif;line-height:1;color:#000;">2</span><span class="t" style="left:448px;top:419px;font:normal 11px 'DejaVu Sans','Liberation Sans',sans-serif;line-height:1;letter-spacing:0.05px;color:#000;">$2,500.00</span><span class="t" style="left:571.5px;top:419px;font:normal 11px 'DejaVu Sans','Liberation Sans',sans-serif;line-height:1;letter-spacing:0.05px;color:#000;">$1,313.00</span><span class="t" style="left:706px;top:419px;font:normal 11px 'DejaVu Sans','Liberation Sans',sans-serif;line-height:1;color:#000;">1</span><span class="t" style="left:448px;top:439px;font:normal 11px 'DejaVu Sans','Liberation Sans',sans-serif;line-height:1;letter-spacing:0.05px;color:#000;">$4,000.00</span><span class="t" style="left:571.5px;top:439px;font:normal 11px 'DejaVu Sans','Liberation Sans',sans-serif;line-height:1;letter-spacing:-0.03px;color:#000;">$0.00</span><span class="t" style="left:706px;top:439px;font:normal 11px 'DejaVu Sans','Liberation Sans',sans-serif;line-height:1;color:#000;">0</span><span class="t" style="left:448.5px;top:478px;font:normal 11px 'DejaVu Sans','Liberation Sans',sans-serif;line-height:1;color:#000;">-</span><span class="t" style="left:572px;top:478px;font:normal 11px 'DejaVu Sans','Liberation Sans',sans-serif;line-height:1;color:#000;">-</span><span class="t" style="left:706.5px;top:478px;font:normal 11px 'DejaVu Sans','Liberation Sans',sans-serif;line-height:1;color:#000;">-</span><span class="t" style="left:448.5px;top:498px;font:normal 11px 'DejaVu Sans','Liberation Sans',sans-serif;line-height:1;color:#000;">-</span><span class="t" style="left:572px;top:498px;font:normal 11px 'DejaVu Sans','Liberation Sans',sans-serif;line-height:1;color:#000;">-</span><span class="t" style="left:706.5px;top:498px;font:normal 11px 'DejaVu Sans','Liberation Sans',sans-serif;line-height:1;color:#000;">-</span><span class="t" style="left:448.5px;top:518px;font:normal 11px 'DejaVu Sans','Liberation Sans',sans-serif;line-height:1;color:#000;">-</span><span class="t" style="left:572px;top:518px;font:normal 11px 'DejaVu Sans','Liberation Sans',sans-serif;line-height:1;color:#000;">-</span><span class="t" style="left:706.5px;top:518px;font:normal 11px 'DejaVu Sans','Liberation Sans',sans-serif;line-height:1;color:#000;">-</span><span class="t" style="left:448.5px;top:538px;font:normal 11px 'DejaVu Sans','Liberation Sans',sans-serif;line-height:1;color:#000;">-</span><span class="t" style="left:572px;top:538px;font:normal 11px 'DejaVu Sans','Liberation Sans',sans-serif;line-height:1;color:#000;">-</span><span class="t" style="left:706.5px;top:538px;font:normal 11px 'DejaVu Sans','Liberation Sans',sans-serif;line-height:1;color:#000;">-</span><div style="left:6px;top:560px;width:804px;height:25px;background:#4a4a4a"></div>
<span class="t" style="left:12.5px;top:569px;font:normal 9px 'DejaVu Sans','Liberation Sans',sans-serif;line-height:1;letter-spacing:0.99px;color:#fff;">Nov 16 2006 11:57 EST</span><span class="t" style="left:235.2px;top:568px;font:normal 11px 'DejaVu Sans','Liberation Sans',sans-serif;line-height:1;letter-spacing:0.04px;color:#fff;">Home</span><span class="t" style="left:291px;top:568px;font:normal 11px 'DejaVu Sans','Liberation Sans',sans-serif;line-height:1;letter-spacing:0.32px;color:#fff;">Privacy Act</span><span class="t" style="left:378.2px;top:568px;font:normal 11px 'DejaVu Sans','Liberation Sans',sans-serif;line-height:1;letter-spacing:0.01px;color:#fff;">Links</span><span class="t" style="left:430.5px;top:568px;font:normal 11px 'DejaVu Sans','Liberation Sans',sans-serif;line-height:1;letter-spacing:0.08px;color:#fff;">Contact Us</span><span class="t" style="left:515px;top:568px;font:normal 11px 'DejaVu Sans','Liberation Sans',sans-serif;line-height:1;letter-spacing:0.24px;color:#fff;">Today's Update</span><span class="t" style="left:626.2px;top:568px;font:normal 11px 'DejaVu Sans','Liberation Sans',sans-serif;line-height:1;letter-spacing:-0.36px;color:#fff;">Help</span><span class="t" style="left:674.2px;top:568px;font:normal 11px 'DejaVu Sans','Liberation Sans',sans-serif;line-height:1;letter-spacing:0.24px;color:#fff;">Glossary</span><span class="t" style="left:747.4px;top:568px;font:normal 11px 'DejaVu Sans','Liberation Sans',sans-serif;line-height:1;letter-spacing:0.17px;color:#fff;">Log Off</span><span class="t" style="left:277.5px;top:568px;font:normal 11px 'DejaVu Sans','Liberation Sans',sans-serif;line-height:1;color:#fff;">|</span><span class="t" style="left:364.5px;top:568px;font:normal 11px 'DejaVu Sans','Liberation Sans',sans-serif;line-height:1;color:#fff;">|</span><span class="t" style="left:416.5px;top:568px;font:normal 11px 'DejaVu Sans','Liberation Sans',sans-serif;line-height:1;color:#fff;">|</span><span class="t" style="left:501.5px;top:568px;font:normal 11px 'DejaVu Sans','Liberation Sans',sans-serif;line-height:1;color:#fff;">|</span><span class="t" style="left:613px;top:568px;font:normal 11px 'DejaVu Sans','Liberation Sans',sans-serif;line-height:1;color:#fff;">|</span><span class="t" style="left:660.5px;top:568px;font:normal 11px 'DejaVu Sans','Liberation Sans',sans-serif;line-height:1;color:#fff;">|</span><span class="t" style="left:733.5px;top:568px;font:normal 11px 'DejaVu Sans','Liberation Sans',sans-serif;line-height:1;color:#fff;">|</span><svg style="left:44px;top:126px" width="58" height="58" viewBox="0 0 58 58"><defs><path id="sealTop" d="M7.38 26.81A21.700 21.700 0 1 1 50.62 26.81"/><path id="sealBot" d="M6.31 41.80A26.200 26.200 0 0 0 51.69 41.80"/>
<clipPath id="sealClip"><circle cx="29" cy="28.7" r="18.500"/></clipPath></defs>
<circle cx="29" cy="28.7" r="28.200" fill="#f2cf3a"/>
<circle cx="29" cy="28.7" r="27.300" fill="#2160c6"/>
<circle cx="29" cy="28.7" r="19.600" fill="#f2cf3a"/>
<circle cx="29" cy="28.7" r="18.600" fill="#cfd4ee"/>
<g clip-path="url(#sealClip)"><path d="M29.0 28.7L47.5 27.4L47.5 30.0z" fill="#f6e04a"/><path d="M29.0 28.7L47.2 32.2L46.5 34.7z" fill="#fdfdf0"/><path d="M29.0 28.7L45.6 36.8L44.3 39.0z" fill="#f6e04a"/><path d="M29.0 28.7L43.0 40.8L41.1 42.7z" fill="#fdfdf0"/><path d="M29.0 28.7L39.3 44.0L37.1 45.3z" fill="#f6e04a"/><path d="M29.0 28.7L35.0 46.2L32.5 46.9z" fill="#fdfdf0"/><path d="M29.0 28.7L30.3 47.2L27.7 47.2z" fill="#f6e04a"/><path d="M29.0 28.7L25.5 46.9L23.0 46.2z" fill="#fdfdf0"/><path d="M29.0 28.7L20.9 45.3L18.7 44.0z" fill="#f6e04a"/><path d="M29.0 28.7L16.9 42.7L15.0 40.8z" fill="#fdfdf0"/><path d="M29.0 28.7L13.7 39.0L12.4 36.8z" fill="#f6e04a"/><path d="M29.0 28.7L11.5 34.7L10.8 32.2z" fill="#fdfdf0"/><path d="M29.0 28.7L10.5 30.0L10.5 27.4z" fill="#f6e04a"/><path d="M29.0 28.7L10.8 25.2L11.5 22.7z" fill="#fdfdf0"/><path d="M29.0 28.7L12.4 20.6L13.7 18.4z" fill="#f6e04a"/><path d="M29.0 28.7L15.0 16.6L16.9 14.7z" fill="#fdfdf0"/><path d="M29.0 28.7L18.7 13.4L20.9 12.1z" fill="#f6e04a"/><path d="M29.0 28.7L23.0 11.2L25.5 10.5z" fill="#fdfdf0"/><path d="M29.0 28.7L27.7 10.2L30.3 10.2z" fill="#f6e04a"/><path d="M29.0 28.7L32.5 10.5L35.0 11.2z" fill="#fdfdf0"/><path d="M29.0 28.7L37.1 12.1L39.3 13.4z" fill="#f6e04a"/><path d="M29.0 28.7L41.1 14.7L43.0 16.6z" fill="#fdfdf0"/><path d="M29.0 28.7L44.3 18.4L45.6 20.6z" fill="#f6e04a"/><path d="M29.0 28.7L46.5 22.7L47.2 25.2z" fill="#fdfdf0"/>
<path d="M12 46.500h34l-6-6.500H18z" fill="#f4d838"/><path d="M18 45.500c5-2.500 17-2.500 22 0l-3 2.500H21z" fill="#1a1408"/>
<path d="M26 45c2-5 2-8-1-12l-6-5 1.500-1.200 6 4.200 1-7h2.500l.5 7 6.500-5 1.300 1.300-6.300 6.200c-1.500 4-1 7 1.500 11.500z" fill="#20160a"/>
<ellipse cx="29" cy="22.500" rx="17" ry="12.500" fill="#16884a"/><ellipse cx="18" cy="30" rx="6.500" ry="5.500" fill="#16884a"/><ellipse cx="40" cy="30" rx="6.500" ry="5.500" fill="#16884a"/>
<ellipse cx="26.2" cy="27.9" rx="1.3" ry="1.3" fill="#0c6a34"/><ellipse cx="26.4" cy="25.9" rx="1.4" ry="1.0" fill="#167a3e"/><ellipse cx="22.2" cy="26.6" rx="1.6" ry="1.5" fill="#167a3e"/><ellipse cx="34.4" cy="27.7" rx="2.1" ry="1.3" fill="#167a3e"/><ellipse cx="16.4" cy="30.9" rx="1.8" ry="1.0" fill="#0c6a34"/><ellipse cx="18.7" cy="28.0" rx="1.5" ry="1.5" fill="#167a3e"/><ellipse cx="34.1" cy="32.0" rx="1.6" ry="1.3" fill="#2fb862"/><ellipse cx="32.6" cy="24.8" rx="1.7" ry="1.3" fill="#2fb862"/><ellipse cx="30.9" cy="15.6" rx="1.6" ry="1.1" fill="#3cc470"/><ellipse cx="35.0" cy="33.3" rx="1.8" ry="1.3" fill="#0c6a34"/><ellipse cx="38.7" cy="16.5" rx="1.8" ry="1.0" fill="#0a5a2c"/><ellipse cx="22.5" cy="23.3" rx="1.4" ry="1.2" fill="#0a5a2c"/><ellipse cx="41.7" cy="26.1" rx="1.8" ry="1.5" fill="#167a3e"/><ellipse cx="23.8" cy="32.9" rx="1.7" ry="1.5" fill="#167a3e"/><ellipse cx="33.4" cy="25.2" rx="1.7" ry="1.4" fill="#0a5a2c"/><ellipse cx="41.4" cy="27.4" rx="2.2" ry="1.5" fill="#167a3e"/><ellipse cx="26.9" cy="31.0" rx="1.2" ry="1.2" fill="#0a5a2c"/><ellipse cx="31.7" cy="27.3" rx="1.4" ry="1.1" fill="#0c6a34"/><ellipse cx="28.3" cy="16.2" rx="1.3" ry="1.2" fill="#3cc470"/><ellipse cx="14.7" cy="20.3" rx="2.1" ry="1.1" fill="#3cc470"/><ellipse cx="20.7" cy="27.3" rx="2.2" ry="1.0" fill="#3cc470"/><ellipse cx="32.4" cy="28.9" rx="1.2" ry="1.5" fill="#2fb862"/><ellipse cx="32.5" cy="29.5" rx="1.6" ry="1.2" fill="#2fb862"/><ellipse cx="14.7" cy="19.0" rx="2.2" ry="1.4" fill="#167a3e"/><ellipse cx="28.3" cy="15.6" rx="1.6" ry="1.2" fill="#167a3e"/><ellipse cx="39.1" cy="29.5" rx="1.4" ry="1.6" fill="#0c6a34"/><ellipse cx="24.1" cy="25.2" rx="1.3" ry="0.9" fill="#167a3e"/><ellipse cx="32.0" cy="26.8" rx="1.8" ry="0.9" fill="#0a5a2c"/><ellipse cx="31.6" cy="30.8" rx="2.2" ry="1.3" fill="#0a5a2c"/><ellipse cx="23.6" cy="24.4" rx="2.2" ry="1.2" fill="#3cc470"/><ellipse cx="24.3" cy="24.1" rx="1.9" ry="1.4" fill="#0c6a34"/><ellipse cx="15.8" cy="25.0" rx="1.2" ry="1.6" fill="#167a3e"/><ellipse cx="23.0" cy="22.9" rx="2.1" ry="1.4" fill="#167a3e"/><ellipse cx="25.2" cy="32.9" rx="1.9" ry="1.1" fill="#0c6a34"/><ellipse cx="24.6" cy="27.3" rx="1.7" ry="1.4" fill="#2fb862"/><ellipse cx="25.4" cy="28.7" rx="2.0" ry="1.5" fill="#2fb862"/><ellipse cx="28.5" cy="18.0" rx="1.7" ry="1.4" fill="#167a3e"/><ellipse cx="43.2" cy="23.0" rx="1.5" ry="1.4" fill="#3cc470"/><ellipse cx="39.3" cy="21.5" rx="2.2" ry="1.2" fill="#0a5a2c"/><ellipse cx="30.4" cy="29.3" rx="1.5" ry="1.2" fill="#2fb862"/><ellipse cx="41.4" cy="22.8" rx="1.7" ry="1.4" fill="#0c6a34"/><ellipse cx="30.4" cy="20.4" rx="2.1" ry="1.4" fill="#0c6a34"/><ellipse cx="29.0" cy="15.4" rx="1.6" ry="1.3" fill="#2fb862"/><ellipse cx="42.3" cy="29.8" rx="1.7" ry="1.4" fill="#3cc470"/><ellipse cx="34.5" cy="26.1" rx="1.2" ry="1.3" fill="#2fb862"/><ellipse cx="16.3" cy="25.8" rx="2.0" ry="1.6" fill="#167a3e"/><ellipse cx="23.8" cy="17.8" rx="1.7" ry="0.9" fill="#167a3e"/><ellipse cx="33.2" cy="14.0" rx="1.7" ry="1.6" fill="#0c6a34"/><ellipse cx="15.3" cy="28.2" rx="1.2" ry="1.0" fill="#2fb862"/><ellipse cx="15.0" cy="23.6" rx="1.5" ry="1.2" fill="#0a5a2c"/><ellipse cx="39.4" cy="32.1" rx="2.1" ry="1.4" fill="#0a5a2c"/><ellipse cx="33.6" cy="15.8" rx="1.3" ry="1.0" fill="#167a3e"/><ellipse cx="14.1" cy="23.0" rx="1.8" ry="1.4" fill="#2fb862"/><ellipse cx="32.5" cy="27.3" rx="1.9" ry="1.3" fill="#167a3e"/><ellipse cx="23.7" cy="31.4" rx="1.7" ry="1.4" fill="#167a3e"/><ellipse cx="31.8" cy="21.8" rx="1.5" ry="1.4" fill="#2fb862"/><ellipse cx="17.0" cy="23.3" rx="1.6" ry="1.3" fill="#0c6a34"/><ellipse cx="17.6" cy="23.4" rx="1.7" ry="1.3" fill="#0a5a2c"/><ellipse cx="13.6" cy="25.3" rx="2.1" ry="1.6" fill="#167a3e"/><ellipse cx="28.3" cy="32.7" rx="2.0" ry="1.0" fill="#2fb862"/><ellipse cx="36.7" cy="29.2" rx="1.9" ry="1.2" fill="#0c6a34"/><ellipse cx="31.0" cy="30.1" rx="2.1" ry="1.0" fill="#0c6a34"/><ellipse cx="26.3" cy="14.2" rx="1.5" ry="1.0" fill="#2fb862"/><ellipse cx="15.5" cy="25.8" rx="1.6" ry="1.2" fill="#0c6a34"/><ellipse cx="43.6" cy="23.0" rx="1.9" ry="1.6" fill="#2fb862"/><ellipse cx="20.5" cy="28.1" rx="1.5" ry="1.4" fill="#0a5a2c"/><ellipse cx="40.8" cy="24.8" rx="1.9" ry="1.2" fill="#3cc470"/><ellipse cx="20.4" cy="23.0" rx="1.3" ry="1.5" fill="#0c6a34"/><ellipse cx="31.0" cy="34.8" rx="1.5" ry="0.9" fill="#0c6a34"/><ellipse cx="30.5" cy="17.6" rx="2.0" ry="1.5" fill="#2fb862"/><ellipse cx="22.0" cy="13.3" rx="1.3" ry="1.5" fill="#3cc470"/><ellipse cx="16.9" cy="19.4" rx="1.5" ry="1.5" fill="#0c6a34"/><ellipse cx="35.2" cy="34.1" rx="2.1" ry="1.3" fill="#0a5a2c"/><ellipse cx="30.5" cy="20.4" rx="1.3" ry="1.5" fill="#2fb862"/><ellipse cx="20.1" cy="25.7" rx="1.6" ry="1.5" fill="#167a3e"/><ellipse cx="26.6" cy="22.0" rx="2.1" ry="1.6" fill="#2fb862"/><ellipse cx="28.5" cy="28.8" rx="1.8" ry="1.3" fill="#0a5a2c"/><ellipse cx="31.9" cy="31.4" rx="1.5" ry="1.5" fill="#2fb862"/><ellipse cx="32.1" cy="23.6" rx="1.9" ry="1.3" fill="#0c6a34"/><ellipse cx="33.1" cy="31.4" rx="1.3" ry="1.5" fill="#3cc470"/><path d="M28 33c0-3-2-5-5-7M30 33c0-3 2-6 6-8M29 32v-8" stroke="#3a2410" stroke-width="1" fill="none"/></g>
<text font-family="Liberation Serif,serif" font-weight="bold" font-size="6.500" fill="#fff"><textPath href="#sealTop" startOffset="1" textLength="70" lengthAdjust="spacingAndGlyphs">DEPARTMENT OF EDUCATION</textPath></text>
<text font-family="Liberation Serif,serif" font-weight="bold" font-size="5" fill="#fff"><textPath href="#sealBot" startOffset="1" textLength="52" lengthAdjust="spacingAndGlyphs">UNITED STATES OF AMERICA</textPath></text>
<circle cx="6.5" cy="35.6" r=".9" fill="#fff"/><circle cx="51.5" cy="35.6" r=".9" fill="#fff"/></svg>
<svg style="left:630px;top:121px" width="84" height="68" viewBox="0 0 84 68"><g transform="translate(7.400,0) scale(.93,1)"><text y="43" x="0 24 43.500" font-family="Liberation Serif,serif" font-size="44" fill="#6b6a56">FSA</text></g>
<rect x="9" y="44.600" width="69" height="1.300" fill="#6b6a56"/>
<text y="52.600" x="9.500" font-family="Liberation Serif,serif" font-weight="bold" font-size="7.600" fill="#1b2a6b" textLength="68" lengthAdjust="spacing">FEDERAL</text>
<rect x="9" y="54" width="69" height="1" fill="#1b2a6b"/>
<text y="62" x="9.500" font-family="Liberation Serif,serif" font-weight="bold" font-size="7.800" fill="#1b2a6b" textLength="68" lengthAdjust="spacing">STUDENT AID</text>
<rect x="9" y="63.500" width="69" height="1" fill="#1b2a6b"/>
<path d="M32 13l8 5.500 10-5-1-6z" fill="#1c2f63"/>
<path d="M24 9.500L36 3.500 50 7 39 13.500z" fill="#f4f0ea"/>
<path d="M24 9.500l2.800-1.400 14.500 4-2.300 1.400zM29.500 6.800l2.600-1.300 14.200 3.600-2.500 1.500zM35 4l1-.5L50 7l-2 1.200z" fill="#d8262c"/>
<path d="M31.500 5.800L36 3.500l6.500 1.700-4.700 2.300z" fill="#2b3f88"/>
<path d="M29.500 11v9" stroke="#e8a820" stroke-width="1.200"/><path d="M28.500 19h2l.5 4.500h-3z" fill="#e8a820"/></svg>
<div style="left:814px;top:121px;width:17px;height:477px;background:#f6f5f0"></div>
<div style="left:830px;top:121px;width:2px;height:477px;background:#eeede5"></div>
<svg style="left:814px;top:121px" width="17" height="17" viewBox="0 0 17 17"><rect x=".5" y=".5" width="15" height="16" rx="2.500" fill="url(#gBtn)" stroke="#fff"/><rect x="1.500" y="1.500" width="13" height="14" rx="2" fill="none" stroke="#b8c8f4" stroke-width=".8"/><path d="M4 10l4-4 4 4" fill="none" stroke="#4d6185" stroke-width="2.200"/></svg>
<svg style="left:814px;top:579px" width="17" height="17" viewBox="0 0 17 17"><rect x=".5" y=".5" width="15" height="16" rx="2.500" fill="url(#gBtn)" stroke="#fff"/><rect x="1.500" y="1.500" width="13" height="14" rx="2" fill="none" stroke="#b8c8f4" stroke-width=".8"/><path d="M4 7l4 4 4-4" fill="none" stroke="#4d6185" stroke-width="2.200"/></svg>
<div style="left:815px;top:139px;width:14px;height:431px;border-radius:2px;background:linear-gradient(to right,#cad8fd,#c4d2fc 50%,#b4c4f4);box-shadow:0 0 0 1px #fff, inset -1px -1px 0 #a4b6ec"></div>
<svg style="left:818px;top:349px" width="9" height="8" viewBox="0 0 9 8"><path d="M1 .5h6M1 2.500h6M1 4.500h6M1 6.500h6" stroke="#eef4fe" stroke-width="1"/><path d="M2 1.500h6M2 3.500h6M2 5.500h6M2 7.500h6" stroke="#8ca0d8" stroke-width="1"/></svg>
<div style="left:4px;top:598px;width:828px;height:23px;background:#eeebdd"></div>
<div style="left:4px;top:598px;width:828px;height:1px;background:#c5c2b0"></div>
<div style="left:4px;top:599px;width:828px;height:1px;background:#fff"></div>
<svg style="left:6px;top:602px" width="17" height="17" viewBox="0 0 17 17"><path d="M5.500 1.500h7l3 3v10.500h-10z" fill="#fff" stroke="#7a86c0" stroke-width="1"/><path d="M12.500 1.500v3h3" fill="#dce8fc" stroke="#7a86c0" stroke-width=".8"/><path d="M6.500 15.800h9.800v-10.500" fill="none" stroke="#a8b2d8" stroke-width="1"/>
<text x="-0.800" y="14.200" font-family="Liberation Sans,sans-serif" font-weight="bold" font-size="18" fill="#3a8cf2" stroke="#1b55c8" stroke-width=".5">e</text>
<path d="M.3 10c2-5.500 8-7.500 11.500-5.800" fill="none" stroke="#8ccaf8" stroke-width="1.300"/></svg>
<div class="sep" style="left:556px;top:601px;height:18px"></div>
<div class="sep" style="left:580px;top:601px;height:18px"></div>
<div class="sep" style="left:604px;top:601px;height:18px"></div>
<div class="sep" style="left:629px;top:601px;height:18px"></div>
<div class="sep" style="left:653px;top:601px;height:18px"></div>
<div class="sep" style="left:678px;top:601px;height:18px"></div>
<svg style="left:659px;top:601px" width="14" height="17" viewBox="0 0 14 17"><path d="M3.500 8V5.500a3.500 3.500 0 0 1 7 0V8" fill="none" stroke="#5a5420" stroke-width="1.600"/><rect x="1.500" y="7.500" width="11" height="8.500" fill="#f4dc3a" stroke="#5a5420" stroke-width="1"/><path d="M3 10.500h8M3 13h8" stroke="#c8a818" stroke-width="1"/></svg>
<svg style="left:683px;top:603.5px" width="14" height="14" viewBox="0 0 14 14"><circle cx="7" cy="7" r="6.200" fill="#1f8f1f" stroke="#0c3c0c" stroke-width="1.200"/><path d="M3.800 7.200l2.400 2.600 4.200-5.200" fill="none" stroke="#fff" stroke-width="1.800"/></svg>
<span class="t" style="left:702.5px;top:606px;font:normal 11px 'Liberation Sans',sans-serif;line-height:1;letter-spacing:-0.16px;color:#000;">Trusted sites</span><svg style="left:820px;top:608px" width="12" height="12" viewBox="0 0 12 12"><g fill="#b8b4a2"><rect x="8" y="0" width="2" height="2"/><rect x="4" y="4" width="2" height="2"/><rect x="8" y="4" width="2" height="2"/><rect x="0" y="8" width="2" height="2"/><rect x="4" y="8" width="2" height="2"/><rect x="8" y="8" width="2" height="2"/></g></svg>
</div>
</body>
</html>
